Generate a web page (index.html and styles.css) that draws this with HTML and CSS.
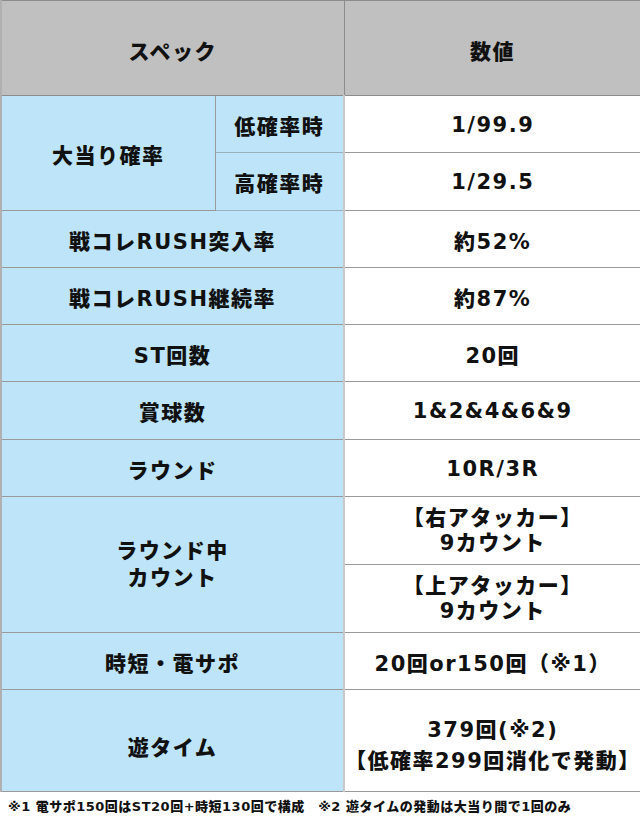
FILE: index.html
```html
<!DOCTYPE html>
<html lang="ja">
<head>
<meta charset="utf-8">
<link rel="stylesheet" href="styles.css">
</head>
<body>
<table class="spec">
  <colgroup>
    <col class="c1"><col class="c2"><col class="c3">
  </colgroup>
  <tr class="r-head">
    <th colspan="2">スペック</th>
    <th>数値</th>
  </tr>
  <tr class="r-std">
    <td class="lbl" rowspan="2">大当り確率</td>
    <td class="lbl sub">低確率時</td>
    <td class="val">1/99.9</td>
  </tr>
  <tr class="r-std">
    <td class="lbl sub">高確率時</td>
    <td class="val">1/29.5</td>
  </tr>
  <tr class="r-std">
    <td class="lbl" colspan="2">戦コレRUSH突入率</td>
    <td class="val">約52%</td>
  </tr>
  <tr class="r-std">
    <td class="lbl" colspan="2">戦コレRUSH継続率</td>
    <td class="val">約87%</td>
  </tr>
  <tr class="r-std">
    <td class="lbl" colspan="2">ST回数</td>
    <td class="val">20回</td>
  </tr>
  <tr class="r-std">
    <td class="lbl" colspan="2">賞球数</td>
    <td class="val">1&amp;2&amp;4&amp;6&amp;9</td>
  </tr>
  <tr class="r-std">
    <td class="lbl" colspan="2">ラウンド</td>
    <td class="val">10R/3R</td>
  </tr>
  <tr class="r-two">
    <td class="lbl multi" colspan="2" rowspan="2">ラウンド中<br>カウント</td>
    <td class="val multi">【右アタッカー】<br>9カウント</td>
  </tr>
  <tr class="r-two">
    <td class="val multi">【上アタッカー】<br>9カウント</td>
  </tr>
  <tr class="r-std">
    <td class="lbl" colspan="2">時短・電サポ</td>
    <td class="val">20回or150回（※1）</td>
  </tr>
  <tr class="r-tall">
    <td class="lbl" colspan="2">遊タイム</td>
    <td class="val multi2">379回(※2)<br>【低確率299回消化で発動】</td>
  </tr>
</table>
<p class="note">※1 電サポ150回はST20回+時短130回で構成　※2 遊タイムの発動は大当り間で1回のみ</p>
</body>
</html>
```
FILE: styles.css
```css
html, body {
  margin: 0;
  padding: 0;
  background: #ffffff;
}
body {
  width: 640px;
  font-family: "DejaVu Sans", "Noto Sans CJK JP", sans-serif;
  color: #111;
}
.spec {
  width: 640px;
  border-collapse: collapse;
  table-layout: fixed;
  border-left: 2px solid #b0b0b0;
  border-top: 1px solid #8a8a8a;
}
.c1 { width: 214px; }
.c2 { width: 129px; }
.c3 { width: 297px; }
.spec th, .spec td {
  padding: 2px 0 0 0;
  text-align: center;
  vertical-align: middle;
  font-weight: 900;
  font-size: 21px;
  border: 1px solid #9a9a9a;
  letter-spacing: 1.5px;
}
.spec th {
  background: #c0c0c0;
  border-color: #8c8c8c;
  padding-top: 4px;
}
.r-head { height: 95px; }
.r-std { height: 57.25px; }
.r-two { height: 68px; }
.r-tall { height: 102px; }
.r-tall td { padding-top: 10px; }
.lbl {
  background: #bde4f8;
  border-color: #8a8a8a;
}
.val {
  background: #ffffff;
  border-color: #c4c4c4;
}
.spec td.val {
  border-left: 2px solid #c8c8c8;
  border-right: 1px solid #9a9a9a;
}
.spec td.lbl.sub {
  border-left: 1px solid #9ab0bc;
  border-bottom-color: #9ab0bc;
}
.multi {
  line-height: 27px;
}
.spec td.val.multi {
  line-height: 25px;
}
.multi2 {
  line-height: 31px;
}
.note {
  margin: 4px 0 0 8px;
  font-size: 13px;
  font-weight: 900;
  letter-spacing: 0.5px;
}
```
